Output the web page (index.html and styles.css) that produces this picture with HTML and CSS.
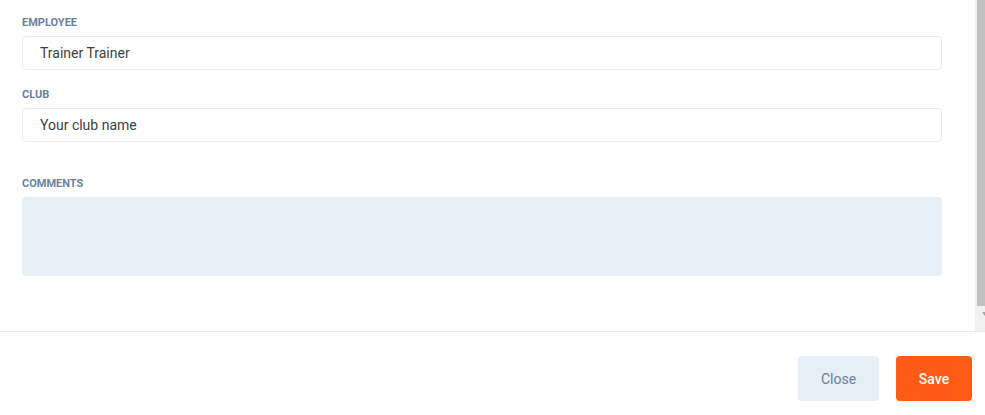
FILE: index.html
```html
<!DOCTYPE html>
<html>
<head>
<meta charset="utf-8">
<link rel="stylesheet" href="styles.css">
</head>
<body>
<div class="modal">
  <div class="body">
    <div class="content">
      <label class="label">Employee</label>
      <div class="input">Trainer Trainer</div>
      <label class="label label-club">Club</label>
      <div class="input">Your club name</div>
      <label class="label label-comments">Comments</label>
      <div class="textarea"></div>
    </div>
    <div class="scrollbar">
      <div class="thumb"></div>
      <div class="arrow"></div>
    </div>
  </div>
  <div class="footer">
    <button class="btn btn-close">Close</button>
    <button class="btn btn-save">Save</button>
  </div>
</div>
</body>
</html>
```
FILE: styles.css
```css
* { box-sizing: border-box; }
html, body { margin: 0; padding: 0; background: #fff; }
body { font-family: Roboto, "Liberation Sans", Arial, sans-serif; width: 985px; height: 415px; overflow: hidden; }
.modal { display: flex; flex-direction: column; height: 415px; }
.body { display: flex; height: 332px; border-bottom: 1px solid #e3ecf4; }
.content { flex: 1; padding: 15px 33px 0 22px; display: flex; flex-direction: column; }
.label {
  display: block;
  font-size: 11px;
  line-height: 11px;
  font-weight: 700;
  text-transform: uppercase;
  color: #6a8198;
  margin-bottom: 8px;
  padding-top: 2px;
  height: 13px;
}
.label-club { margin-top: 17px; }
.label-comments { margin-top: 34px; }
.input {
  height: 34px;
  border: 1px solid #e3ecf4;
  border-radius: 4px;
  padding: 0 17px;
  font-size: 14px;
  line-height: 32px;
  color: #404040;
}
.textarea {
  height: 79px;
  border-radius: 4px;
  background: #e6eef6;
}
.scrollbar {
  width: 10px;
  background: #f1f1f1;
  display: flex;
  flex-direction: column;
  padding-left: 2px;
}
.thumb { height: 306px; background: #c1c1c1; }
.arrow {
  margin-top: 6px;
  margin-left: 5px;
  width: 0; height: 0;
  border-left: 3px solid transparent;
  border-right: 3px solid transparent;
  border-top: 4px solid #a3a3a3;
}
.footer {
  flex: 1;
  display: flex;
  justify-content: flex-end;
  align-items: flex-start;
  padding: 24px 13px 0 0;
  gap: 17px;
}
.btn {
  height: 45px;
  border: none;
  border-radius: 4px;
  font-family: Roboto, "Liberation Sans", Arial, sans-serif;
  font-size: 14px;
  cursor: pointer;
}
.btn-close { width: 81px; background: #e6eef6; color: #6a8198; }
.btn-save { width: 76px; background: #ff5a16; color: #fff; font-weight: 500; }
```
